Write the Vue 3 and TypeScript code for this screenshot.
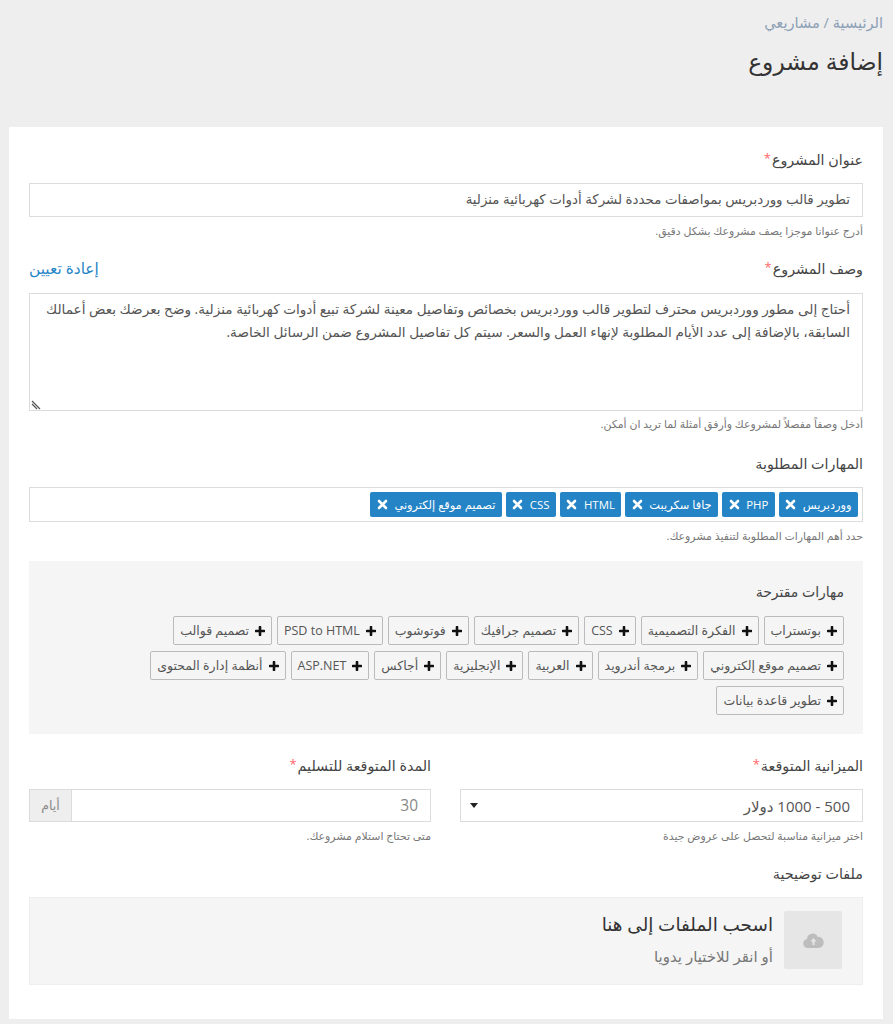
<script setup lang="ts">
const selected: string[] = ['ووردبريس', 'PHP', 'جافا سكريبت', 'HTML', 'CSS', 'تصميم موقع إلكتروني']
const suggested: string[] = ['بوتستراب', 'الفكرة التصميمية', 'CSS', 'تصميم جرافيك', 'فوتوشوب', 'PSD to HTML', 'تصميم قوالب', 'تصميم موقع إلكتروني', 'برمجة أندرويد', 'العربية', 'الإنجليزية', 'أجاكس', 'ASP.NET', 'أنظمة إدارة المحتوى', 'تطوير قاعدة بيانات']
</script>

<template>
  <div class="page" dir="rtl">
    <header class="head">
      <div class="crumbs">الرئيسية / مشاريعي</div>
      <h1 class="title">إضافة مشروع</h1>
    </header>
    <main class="card">
      <section class="field f1">
        <label class="label">عنوان المشروع<span class="req">*</span></label>
        <div class="control">تطوير قالب ووردبريس بمواصفات محددة لشركة أدوات كهربائية منزلية</div>
        <p class="help">أدرج عنوانا موجزا يصف مشروعك بشكل دقيق.</p>
      </section>

      <section class="field f2">
        <div class="label-row">
          <label class="label">وصف المشروع<span class="req">*</span></label>
          <a class="reset">إعادة تعيين</a>
        </div>
        <div class="control area">أحتاج إلى مطور ووردبريس محترف لتطوير قالب ووردبريس بخصائص وتفاصيل معينة لشركة تبيع أدوات كهربائية منزلية. وضح بعرضك بعض أعمالك السابقة، بالإضافة إلى عدد الأيام المطلوبة لإنهاء العمل والسعر. سيتم كل تفاصيل المشروع ضمن الرسائل الخاصة.
          <svg class="grip" width="11" height="10" viewBox="0 0 11 10"><path d="M1 1l8 8M1 4l5 5" stroke="#555" stroke-width="1.2" fill="none" /></svg>
        </div>
        <p class="help tight">أدخل وصفاً مفصلاً لمشروعك وأرفق أمثلة لما تريد ان أمكن.</p>
      </section>

      <section class="field f3">
        <label class="label">المهارات المطلوبة</label>
        <div class="tagbox">
          <span v-for="s in selected" :key="s" class="chip">
            <span>{{ s }}</span>
            <svg width="11" height="11" viewBox="0 0 11 11"><path d="M2 2l7 7M9 2l-7 7" stroke="#fff" stroke-width="2.6" stroke-linecap="round" /></svg>
          </span>
        </div>
        <p class="help">حدد أهم المهارات المطلوبة لتنفيذ مشروعك.</p>
      </section>

      <section class="suggest">
        <h2 class="suggest-title">مهارات مقترحة</h2>
        <div class="suggest-list">
          <span v-for="s in suggested" :key="s" class="pill">
            <svg width="10" height="10" viewBox="0 0 10 10"><path d="M5 1v8M1 5h8" stroke="#111" stroke-width="2.6" stroke-linecap="round" /></svg>
            <span>{{ s }}</span>
          </span>
        </div>
      </section>

      <section class="cols">
        <div class="col">
          <label class="label">الميزانية المتوقعة<span class="req">*</span></label>
          <div class="control select">
            <span class="select-text">500 - 1000 دولار</span>
            <span class="caret"></span>
          </div>
          <p class="help">اختر ميزانية مناسبة لتحصل على عروض جيدة</p>
        </div>
        <div class="col">
          <label class="label">المدة المتوقعة للتسليم<span class="req">*</span></label>
          <div class="group">
            <div class="group-input">30</div>
            <div class="addon">أيام</div>
          </div>
          <p class="help">متى تحتاج استلام مشروعك.</p>
        </div>
      </section>

      <section class="files">
        <label class="label">ملفات توضيحية</label>
        <div class="drop">
          <div class="drop-icon">
            <svg width="21" height="16" viewBox="0 0 21 16">
              <path d="M5 16a4.6 4.6 0 0 1-1-9.1A5.6 5.6 0 0 1 14.6 4.7 5.7 5.7 0 0 1 16 16z" fill="#bdbdbd" />
              <path d="M10.5 6l3 3.4h-2V13h-2V9.400h-2z" fill="#e6e6e6" />
            </svg>
          </div>
          <div class="drop-text">
            <div class="drop-title">اسحب الملفات إلى هنا</div>
            <div class="drop-sub">أو انقر للاختيار يدويا</div>
          </div>
        </div>
      </section>
    </main>
  </div>
</template>

<style>
html, body { margin: 0; background: #eeeeee; }
</style>

<style scoped>
.page {
  width: 893px;
  height: 1024px;
  box-sizing: border-box;
  overflow: hidden;
  background: #eeeeee;
  padding: 0 10px 5px 9px;
  font-family: "Open Sans", "DejaVu Sans", sans-serif;
  color: #444;
}
.head { height: 127px; box-sizing: border-box; padding-top: 12px; }
.crumbs { font-size: 14.6px; line-height: 20px; color: #8c9fb5; }
.title { margin: 11px 0 0; font-size: 23.4px; line-height: 36px; font-weight: 400; color: #333; }
.card {
  height: 892px;
  box-sizing: border-box;
  background: #fff;
  padding: 22px 20px 0;
}
.label { display: block; font-size: 14.3px; line-height: 22px; color: #444; font-weight: 400; }
.req { color: #f66; font-size: 13px; margin-right: 1px; position: relative; top: -2px; }
.label-row { display: flex; justify-content: space-between; align-items: center; }
.reset { font-size: 15.4px; line-height: 22px; color: #2484c6; }
.control {
  box-sizing: border-box;
  height: 34px;
  margin-top: 12px;
  border: 1px solid #dcdcdc;
  padding: 0 12px;
  font-size: 13.4px;
  line-height: 30px;
  color: #555;
  background: #fff;
}
.field .label-row + .control { margin-top: 13px; }
.area {
  position: relative;
  height: 118px;
  padding: 3px 12px;
  font-size: 13.63px;
  line-height: 23px;
}
.grip { position: absolute; left: 1px; bottom: 0; }
.help { margin: 6px 0 0; font-size: 10.9px; line-height: 15px; color: #777; }
.help.tight { margin-top: 5px; }
.f2 { margin-top: 20px; }
.f3 { margin-top: 22px; }
.tagbox {
  box-sizing: border-box;
  height: 35px;
  margin-top: 12px;
  border: 1px solid #dcdcdc;
  padding: 4px 4px;
  display: flex;
  gap: 4px;
}
.chip {
  display: inline-flex;
  align-items: center;
  gap: 6.5px;
  height: 25px;
  box-sizing: border-box;
  padding: 0 6.5px;
  background: #2484c6;
  border-radius: 2px;
  color: #fff;
  font-size: 11.4px;
}
.suggest {
  margin-top: 18px;
  height: 173px;
  box-sizing: border-box;
  background: #f5f5f5;
  padding: 20px 19px 0;
}
.suggest-title { margin: 0; font-size: 14px; line-height: 22px; font-weight: 400; color: #444; }
.suggest-list { display: flex; flex-wrap: wrap; gap: 6px 5px; margin-top: 13px; }
.pill {
  display: inline-flex;
  align-items: center;
  gap: 6px;
  height: 29px;
  box-sizing: border-box;
  padding: 0 6px;
  border: 1px solid #bbb;
  border-radius: 2px;
  font-size: 12.5px;
  color: #555;
}
.cols { display: grid; grid-template-columns: 403px 402px; gap: 29px; margin-top: 21px; }
.col { min-width: 0; }
.select { display: flex; justify-content: space-between; align-items: center; font-size: 15px; height: 33px; margin-top: 12px; }
.caret { width: 0; height: 0; border: 4px solid transparent; border-top: 5px solid #222; border-bottom: 0; margin-left: -3px; }
.group { display: flex; height: 33px; margin-top: 12px; }
.group-input {
  flex: 1;
  box-sizing: border-box;
  border: 1px solid #dcdcdc;
  padding: 0 12px;
  font-size: 15.5px;
  line-height: 31px;
  color: #888;
}
.addon {
  width: 42px;
  box-sizing: border-box;
  background: #eeeeee;
  border: 1px solid #dcdcdc;
  border-right: 0;
  text-align: center;
  font-size: 12.5px;
  line-height: 31px;
  color: #888;
}
.files { margin-top: 20px; }
.drop {
  margin-top: 12px;
  height: 88px;
  box-sizing: border-box;
  background: #f5f5f5;
  border: 1px solid #eee;
  padding: 13px 20px;
  display: flex;
  gap: 11px;
}
.drop-icon {
  width: 58px;
  height: 58px;
  background: #e6e6e6;
  border-radius: 2px;
  display: flex;
  align-items: center;
  justify-content: center;
}
.drop-title { font-size: 18.4px; line-height: 24px; color: #333; margin-top: 1px; }
.drop-sub { font-size: 15px; line-height: 20px; color: #777; margin-top: 10px; }
</style>
